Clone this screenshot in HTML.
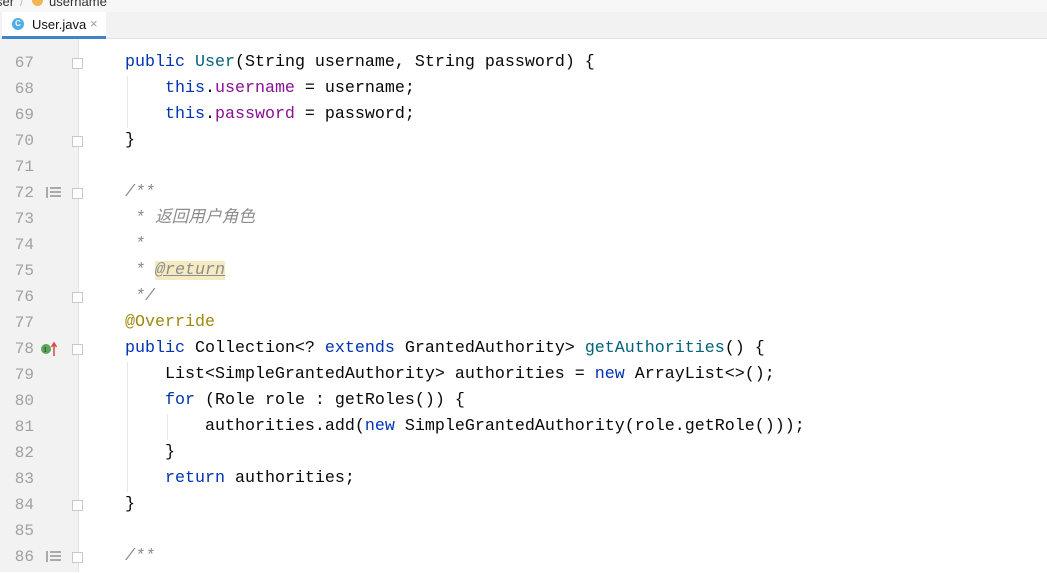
<!DOCTYPE html>
<html><head><meta charset="utf-8"><style>
body{margin:0;width:1047px;height:572px;overflow:hidden;background:#fff;position:relative;font-family:"Liberation Mono",monospace;}
.bc{position:absolute;top:0;left:0;width:1047px;height:12px;background:#f7f7f7;overflow:hidden;font:13px "Liberation Sans",sans-serif;color:#333}
.tabs{position:absolute;top:12px;left:0;width:1047px;height:26px;background:#f2f2f2;border-bottom:1px solid #e4e4e4}
.tab{position:absolute;left:2px;top:0;width:104px;height:24px;background:#fff;border-bottom:3px solid #4083c9;box-sizing:content-box}
.gut{position:absolute;top:39px;left:0;width:78px;height:533px;background:#f2f2f2;border-right:1px solid #e2e2e2}
.ln{position:absolute;left:0;width:34px;text-align:right;color:#a0a0a0;font-size:16px;height:26px;line-height:26px}
.code{position:absolute;left:125px;white-space:pre;font-size:16.67px;height:26px;line-height:26px;color:#080808}
.k{color:#0033b3}.m{color:#00627a}.f{color:#871094}.c{color:#8c8c8c;font-style:italic}.a{color:#9e880d}
.fold{position:absolute;left:72px;width:11px;height:11px;border:1px solid #c8c8c8;background:#fff;box-sizing:border-box}
.guide{position:absolute;width:1px;background:#e8e8e8}
#w{position:absolute;left:0;top:1px;width:1047px;height:572px}
</style></head><body>
<div class="bc"><span style="position:absolute;left:-4px;top:-6px">ser</span><span style="position:absolute;left:20px;top:-6px;color:#bbb">/</span><span style="position:absolute;left:32px;top:-5px;width:11px;height:11px;border-radius:50%;background:#f3b454"></span><span style="position:absolute;left:49px;top:-6px">username</span></div>
<div class="tabs"><div class="tab">
<span style="position:absolute;left:10px;top:6px;width:12px;height:12px;border-radius:50%;background:#4eaee6;color:#fff;font:bold 8px 'Liberation Sans';text-align:center;line-height:12px">C</span>
<span style="position:absolute;left:30px;top:5px;font:13px 'Liberation Sans',sans-serif;color:#111">User.java</span>
<span style="position:absolute;left:88px;top:4px;font:13px 'Liberation Sans';color:#999">×</span></div></div>
<div class="gut"></div>
<div id="w">
<div class="guide" style="left:127px;top:75px;height:52px"></div>
<div class="guide" style="left:127px;top:361px;height:130px"></div>
<div class="guide" style="left:167px;top:413px;height:26px"></div>
<div class="ln" style="top:49px">67</div><div class="code" style="top:49px"><span class="k">public</span> <span class="m">User</span>(String username, String password) {</div>
<div class="ln" style="top:75px">68</div><div class="code" style="top:75px">    <span class="k">this</span>.<span class="f">username</span> = username;</div>
<div class="ln" style="top:101px">69</div><div class="code" style="top:101px">    <span class="k">this</span>.<span class="f">password</span> = password;</div>
<div class="ln" style="top:127px">70</div><div class="code" style="top:127px">}</div>
<div class="ln" style="top:153px">71</div>
<div class="ln" style="top:179px">72</div><div class="code c" style="top:179px">/**</div>
<div class="ln" style="top:205px">73</div><div class="code c" style="top:205px;font-family:'Liberation Mono','Noto Sans CJK SC',monospace"> * 返回用户角色</div>
<div class="ln" style="top:231px">74</div><div class="code c" style="top:231px"> *</div>
<div class="ln" style="top:257px">75</div><div class="code c" style="top:257px"> * <span style="background:#f5eac1;text-decoration:underline">@return</span></div>
<div class="ln" style="top:283px">76</div><div class="code c" style="top:283px"> */</div>
<div class="ln" style="top:309px">77</div><div class="code a" style="top:309px">@Override</div>
<div class="ln" style="top:335px">78</div><div class="code" style="top:335px"><span class="k">public</span> Collection&lt;? <span class="k">extends</span> GrantedAuthority&gt; <span class="m">getAuthorities</span>() {</div>
<div class="ln" style="top:361px">79</div><div class="code" style="top:361px">    List&lt;SimpleGrantedAuthority&gt; authorities = <span class="k">new</span> ArrayList&lt;&gt;();</div>
<div class="ln" style="top:387px">80</div><div class="code" style="top:387px">    <span class="k">for</span> (Role role : getRoles()) {</div>
<div class="ln" style="top:413px">81</div><div class="code" style="top:413px">        authorities.add(<span class="k">new</span> SimpleGrantedAuthority(role.getRole()));</div>
<div class="ln" style="top:439px">82</div><div class="code" style="top:439px">    }</div>
<div class="ln" style="top:465px">83</div><div class="code" style="top:465px">    <span class="k">return</span> authorities;</div>
<div class="ln" style="top:491px">84</div><div class="code" style="top:491px">}</div>
<div class="ln" style="top:517px">85</div>
<div class="ln" style="top:543px">86</div><div class="code c" style="top:543px">/**</div>
<div class="fold" style="top:57px"></div><div class="fold" style="top:135px"></div><div class="fold" style="top:187px"></div><div class="fold" style="top:291px"></div><div class="fold" style="top:343px"></div><div class="fold" style="top:499px"></div><div class="fold" style="top:551px"></div>
<svg style="position:absolute;left:46px;top:185px" width="16" height="14"><g fill="#aaa"><rect x="0" y="1" width="2" height="11"/><rect x="4" y="1" width="11" height="2"/><rect x="4" y="5" width="11" height="2"/><rect x="4" y="9" width="11" height="2"/></g></svg>
<svg style="position:absolute;left:46px;top:549px" width="16" height="14"><g fill="#aaa"><rect x="0" y="1" width="2" height="11"/><rect x="4" y="1" width="11" height="2"/><rect x="4" y="5" width="11" height="2"/><rect x="4" y="9" width="11" height="2"/></g></svg>
<svg style="position:absolute;left:40px;top:340px" width="20" height="16"><circle cx="6" cy="8" r="5" fill="#5ba55b"/><text x="4" y="11" font-size="7" fill="#222" font-family="Liberation Serif">I</text><path d="M14 15V3M11.5 6L14 2l2.5 4" stroke="#d9463f" stroke-width="1.5" fill="none"/></svg>
</div>
</body></html>
